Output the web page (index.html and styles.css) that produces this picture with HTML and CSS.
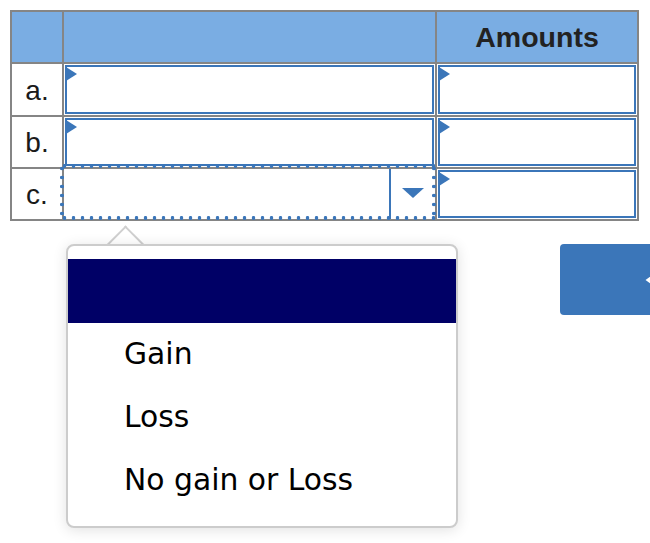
FILE: index.html
```html
<!DOCTYPE html>
<html lang="en">

<head>
    <meta charset="UTF-8">
    <meta name="viewport" content="width=device-width, initial-scale=1.0">
    <title>Amounts</title>
    <link rel="stylesheet" href="styles.css">
</head>

<body>
    <div class="sheet">
        <div class="cell head"></div>
        <div class="cell head"></div>
        <div class="cell head">Amounts</div>

        <div class="cell label">a.</div>
        <div class="cell"><div class="entry"><span class="flag"></span></div></div>
        <div class="cell"><div class="entry"><span class="flag"></span></div></div>

        <div class="cell label">b.</div>
        <div class="cell"><div class="entry"><span class="flag"></span></div></div>
        <div class="cell"><div class="entry"><span class="flag"></span></div></div>

        <div class="cell label">c.</div>
        <div class="cell focus">
            <div class="picker">
                <span class="picker-value"></span>
                <span class="picker-btn">
                    <svg width="22" height="10" viewBox="0 0 22 10"><polygon points="0,0 22,0 11,10" fill="#3b76b9"/></svg>
                </span>
            </div>
            <div class="ring"></div>
        </div>
        <div class="cell"><div class="entry"><span class="flag"></span></div></div>
    </div>

    <div class="actions">
        <button class="check-btn">
            <svg width="20" height="20" viewBox="0 0 20 20"><path d="M12 4 L4 10 L12 16" fill="none" stroke="#fff" stroke-width="3"/></svg>
        </button>
    </div>

    <div class="dropdown">
        <div class="dropdown-arrow"></div>
        <div class="dropdown-list">
            <div class="option selected"></div>
            <div class="option">Gain</div>
            <div class="option">Loss</div>
            <div class="option">No gain or Loss</div>
        </div>
    </div>
</body>

</html>
```

FILE: styles.css
```css
body {
    font-family: "Liberation Sans", Arial, sans-serif;
    background-color: white;
    color: #1a1a1a;
    margin: 0;
    padding: 10px 0 0 10px;
    min-height: 533px;
    position: relative;
}

.sheet {
    display: grid;
    grid-template-columns: 50px 371px 200px;
    grid-template-rows: 50px 51px 50px 50px;
    gap: 2px;
    padding: 2px;
    width: max-content;
    background-color: #858585;
}

.cell {
    background-color: white;
    padding: 1px;
    position: relative;
}

.cell.head {
    background-color: #7aade3;
    display: flex;
    align-items: center;
    justify-content: center;
    font-weight: bold;
    font-size: 28.5px;
    color: #222;
}

.cell.label {
    display: flex;
    align-items: center;
    justify-content: center;
    font-size: 28px;
    padding-top: 3px;
}

.entry {
    position: relative;
    height: 100%;
    box-sizing: border-box;
    border: 2px solid #3b76b9;
    background-color: white;
}

.flag {
    position: absolute;
    left: -1px;
    top: 0;
    width: 0;
    height: 0;
    border-left: 11px solid #3b76b9;
    border-top: 7.5px solid transparent;
    border-bottom: 7.5px solid transparent;
}

.cell.focus {
    padding: 0;
}

.picker {
    display: flex;
    height: 100%;
    background-color: white;
}

.picker-value {
    flex: 1;
}

.picker-btn {
    width: 44px;
    border-left: 2px solid #3b76b9;
    display: flex;
    align-items: center;
    justify-content: center;
    padding-bottom: 2px;
}

.ring {
    position: absolute;
    top: -5px;
    left: -4px;
    right: -1px;
    bottom: -1px;
    background:
        radial-gradient(circle at 50% 50%, #3b76b9 1.7px, transparent 2.1px) left top / 9px 4px repeat-x,
        radial-gradient(circle at 50% 50%, #3b76b9 1.7px, transparent 2.1px) left bottom / 9px 4px repeat-x,
        radial-gradient(circle at 50% 50%, #3b76b9 1.7px, transparent 2.1px) left top / 4px 9px repeat-y,
        radial-gradient(circle at 50% 50%, #3b76b9 1.7px, transparent 2.1px) right top / 4px 9px repeat-y;
    pointer-events: none;
}

.actions {
    margin-top: 23px;
    padding-left: 550px;
    overflow: hidden;
}

.check-btn {
    display: flex;
    align-items: center;
    justify-content: flex-end;
    width: 120px;
    height: 71px;
    padding: 0 16px 0 0;
    border: none;
    border-radius: 4px;
    background-color: #3b76b9;
}

.dropdown {
    position: absolute;
    left: 66px;
    top: 244px;
    width: 392px;
}

.dropdown-arrow {
    position: absolute;
    left: 46px;
    top: -13px;
    width: 25px;
    height: 25px;
    background-color: white;
    border-top: 2px solid #cfcfcf;
    border-left: 2px solid #cfcfcf;
    transform: rotate(45deg);
}

.dropdown-list {
    position: relative;
    background-color: white;
    border: 2px solid #cccccc;
    border-radius: 8px;
    padding: 13px 0 14px 0;
    box-shadow: 0 2px 14px rgba(0, 0, 0, 0.12);
}

.option {
    height: 63px;
    display: flex;
    align-items: center;
    padding-left: 56px;
    padding-bottom: 2px;
    box-sizing: border-box;
    font-family: "DejaVu Sans", Verdana, sans-serif;
    font-size: 29.8px;
    color: #000;
}

.option.selected {
    height: 64px;
    padding: 0;
    background-color: #000066;
}
```
